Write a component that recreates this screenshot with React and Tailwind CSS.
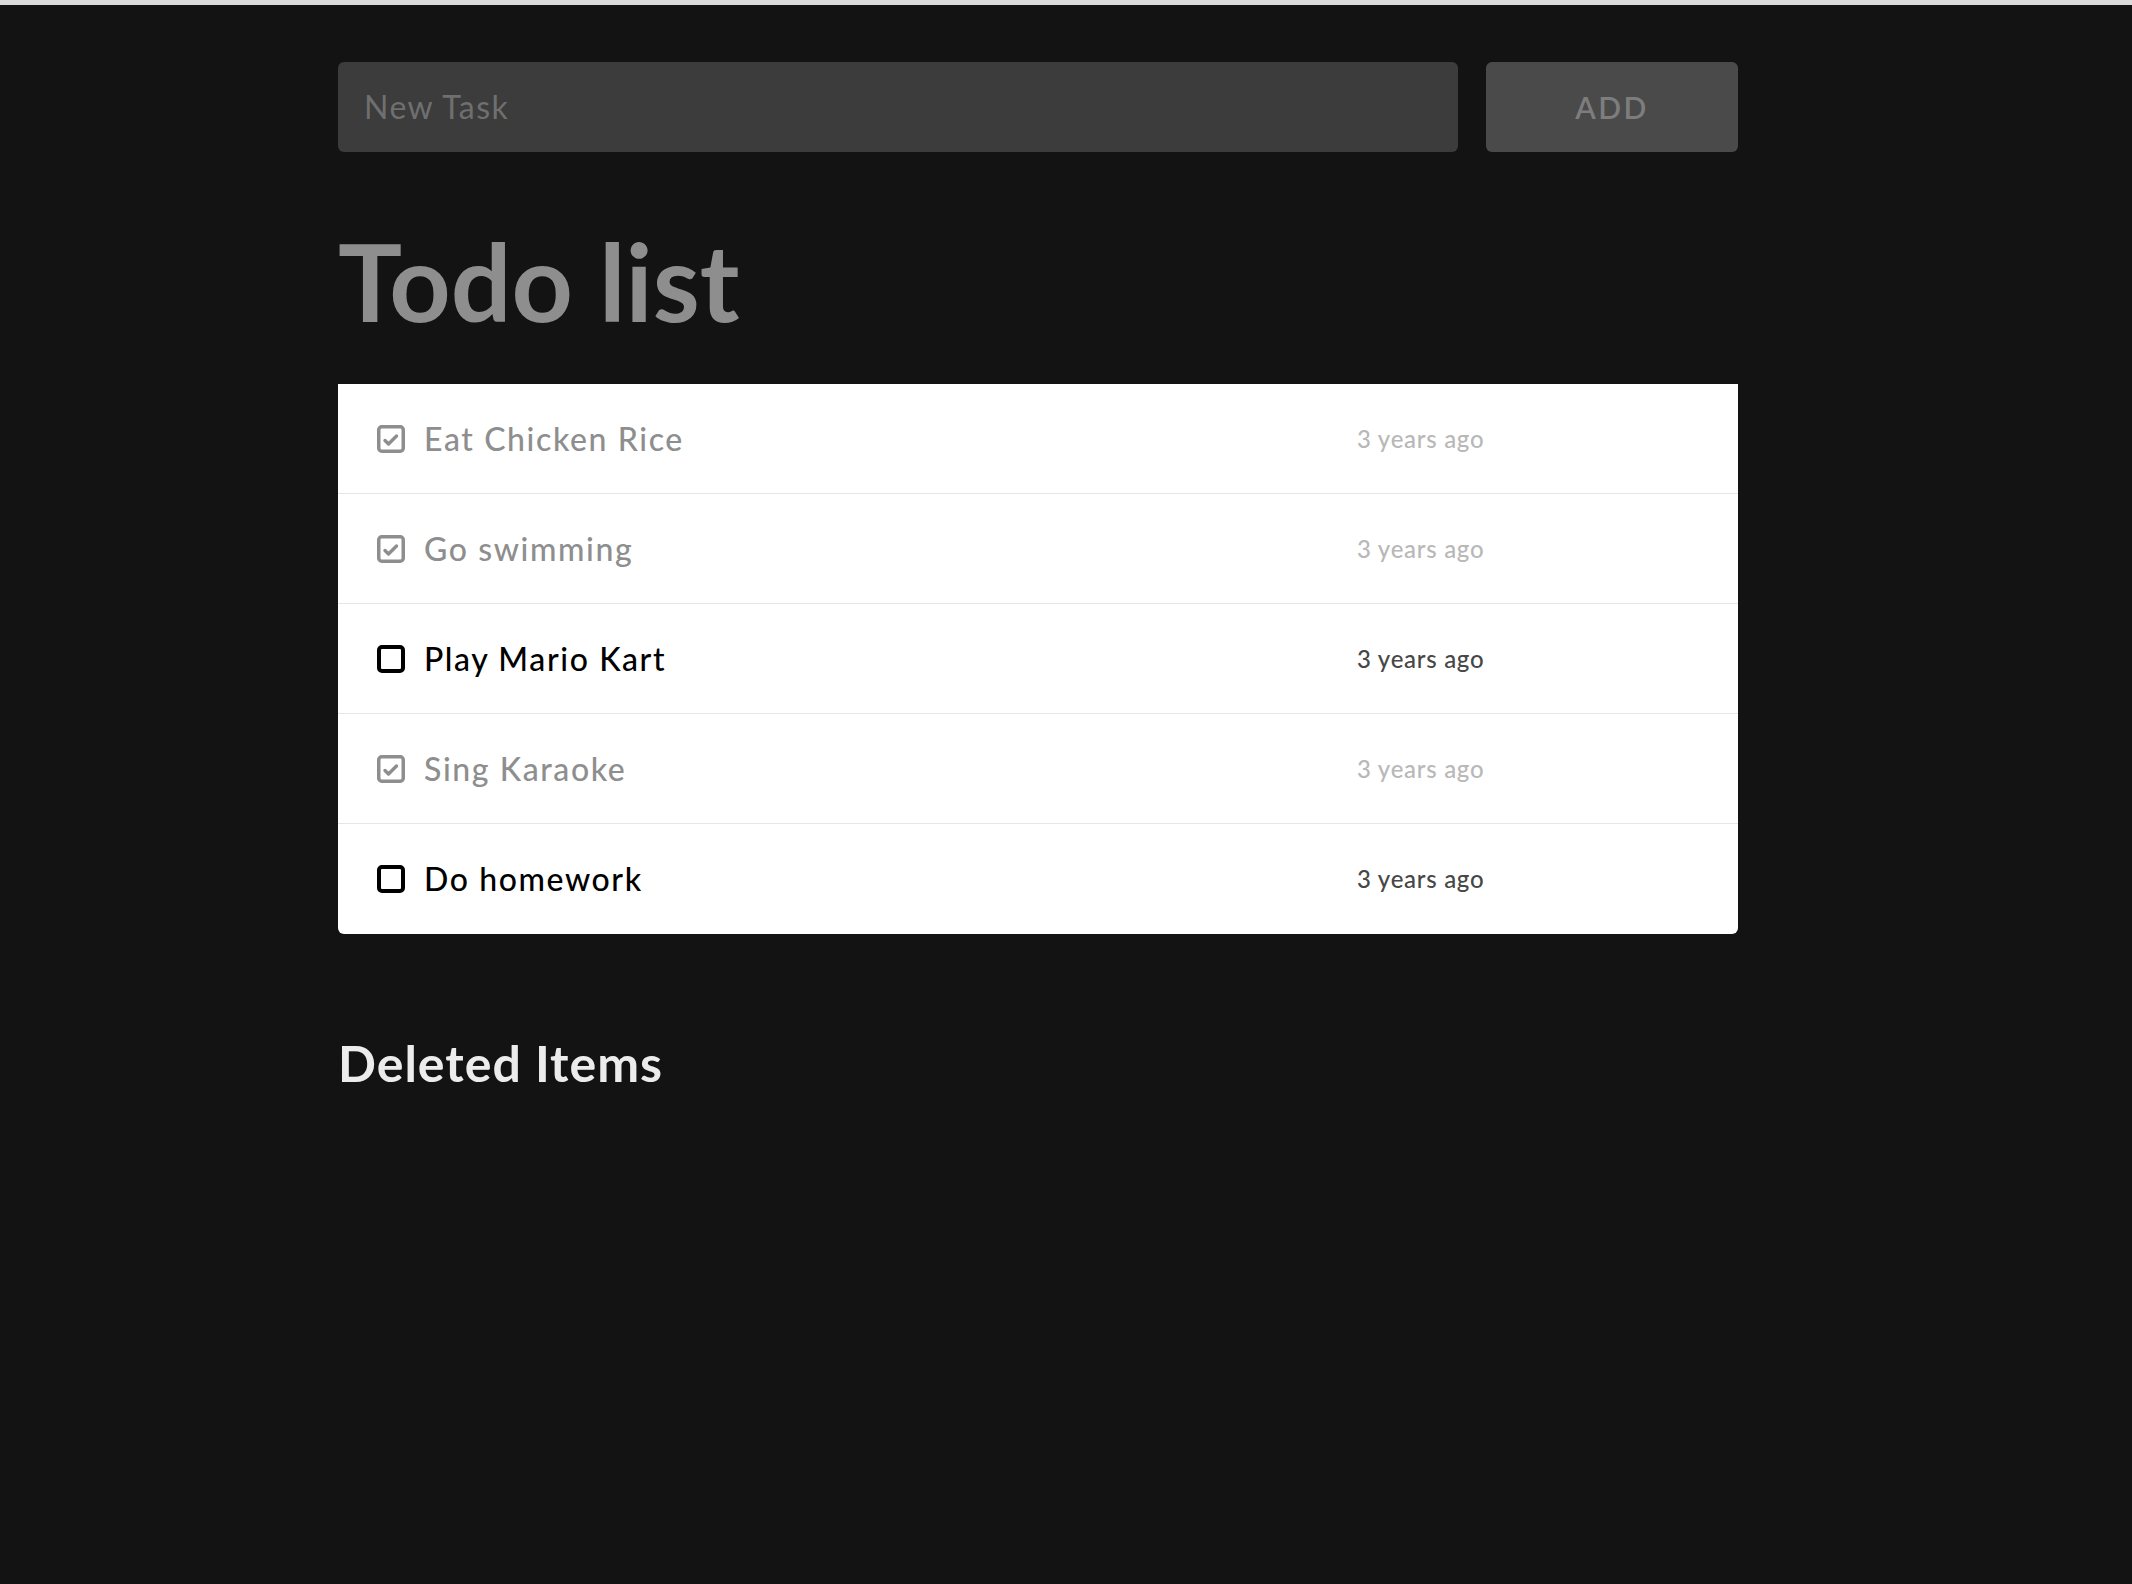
const todos = [
  { id: 1, text: 'Eat Chicken Rice', done: true },
  { id: 2, text: 'Go swimming', done: true },
  { id: 3, text: 'Play Mario Kart', done: false },
  { id: 4, text: 'Sing Karaoke', done: true },
  { id: 5, text: 'Do homework', done: false },
];

const CheckIcon = ({ done }) => (
  <svg width="28" height="28" viewBox="0 0 28 28" fill="none" className="shrink-0">
    <rect
      x={done ? 1.75 : 2}
      y={done ? 1.75 : 2}
      width={done ? 24.5 : 24}
      height={done ? 24.5 : 24}
      rx="3"
      stroke={done ? '#8e8e8e' : '#000000'}
      strokeWidth={done ? 3.5 : 4}
    />
    {done && (
      <polyline
        points="8,15.5 11.5,19 19.5,11"
        stroke="#8e8e8e"
        strokeWidth="3.4"
        strokeLinecap="round"
        strokeLinejoin="round"
      />
    )}
  </svg>
);

const TodoRow = ({ todo, last }) => (
  <div
    className={`flex items-center h-[110px] bg-white ${last ? '' : 'border-b border-[#e6e6e6]'}`}
  >
    <div className="flex-1 flex items-center pl-[39px] gap-[19px]">
      <CheckIcon done={todo.done} />
      <span
        className={`text-[32px] font-medium tracking-[0.05em] ${todo.done ? 'text-[#8e8e8e]' : 'text-black'}`}
      >
        {todo.text}
      </span>
    </div>
    <div className="w-[381px]">
      <span
        className={`text-[24px] font-medium tracking-[0.03em] ${todo.done ? 'text-[#b8b8b8]' : 'text-[#474747]'}`}
      >
        3 years ago
      </span>
    </div>
  </div>
);

export default function App() {
  return (
    <div className="min-h-[1584px] bg-[#131313] font-['Lato','Liberation_Sans',sans-serif]">
      <div className="h-[5px] bg-[#dadada]" />

      <main className="ml-[338px] w-[1400px] pt-[57px]">
        {/* Add task */}
        <div className="flex gap-[28px] h-[90px]">
          <input
            type="text"
            placeholder="New Task"
            className="flex-1 rounded-md bg-[#3c3c3c] pl-[26px] text-[32px] tracking-[0.045em] text-[#dddddd] placeholder:text-[#6f6f6f] outline-none"
          />
          <button className="w-[252px] rounded-md bg-[#4a4a4a] text-[30px] font-semibold tracking-[0.08em] text-[#7d7d7d]">
            ADD
          </button>
        </div>

        <h1 className="mt-[75px] text-[107px] leading-none font-bold text-[#8e8e8e]">
          Todo list
        </h1>

        {/* List */}
        <div className="mt-[50px] rounded-b-md overflow-hidden">
          {todos.map((t, i) => (
            <TodoRow key={t.id} todo={t} last={i === todos.length - 1} />
          ))}
        </div>

        <h2 className="mt-[104px] text-[50px] leading-none font-bold tracking-[0.02em] text-[#ececec]">
          Deleted Items
        </h2>
      </main>
    </div>
  );
}
